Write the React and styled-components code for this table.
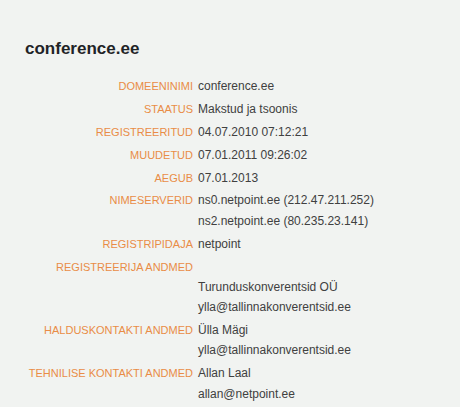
import React from "react";
import styled, { createGlobalStyle } from "styled-components";

const GlobalStyle = createGlobalStyle`
  html, body {
    margin: 0;
    padding: 0;
    background: #f1f3f1;
  }
  body {
    font-family: "Liberation Sans", Arial, sans-serif;
    -webkit-font-smoothing: antialiased;
  }
`;

const Page = styled.div`
  padding: 39px 0 0 25px;
  min-height: 407px;
  box-sizing: border-box;
`;

const Title = styled.h2`
  margin: 0 0 17px;
  font-size: 17px;
  line-height: 20px;
  font-weight: 700;
  color: #1f2327;
`;

const InfoGrid = styled.dl`
  margin: 0;
  display: grid;
  grid-template-columns: 168px 1fr;
  column-gap: 5px;
  row-gap: 2.6px;
  align-items: baseline;
`;

const Label = styled.dt`
  text-align: right;
  font-size: 11px;
  line-height: 20.3px;
  color: #e98c46;
  text-transform: uppercase;
`;

const Value = styled.dd`
  margin: 0;
  font-size: 12px;
  line-height: 20.3px;
  color: #404040;
`;

const rows = [
  { label: "Domeeninimi", lines: ["conference.ee"] },
  { label: "Staatus", lines: ["Makstud ja tsoonis"] },
  { label: "Registreeritud", lines: ["04.07.2010 07:12:21"] },
  { label: "Muudetud", lines: ["07.01.2011 09:26:02"] },
  { label: "Aegub", lines: ["07.01.2013"] },
  {
    label: "Nimeserverid",
    lines: ["ns0.netpoint.ee (212.47.211.252)", "ns2.netpoint.ee (80.235.23.141)"],
  },
  { label: "Registripidaja", lines: ["netpoint"] },
  {
    label: "Registreerija andmed",
    lines: ["\u00a0", "Turunduskonverentsid OÜ", "ylla@tallinnakonverentsid.ee"],
  },
  {
    label: "Halduskontakti andmed",
    lines: ["Ülla Mägi", "ylla@tallinnakonverentsid.ee"],
  },
  { label: "Tehnilise kontakti andmed", lines: ["Allan Laal", "allan@netpoint.ee"] },
];

export default function App() {
  return (
    <>
      <GlobalStyle />
      <Page>
        <Title>conference.ee</Title>
        <InfoGrid>
          {rows.map(row => (
            <React.Fragment key={row.label}>
              <Label>{row.label}</Label>
              <Value>
                {row.lines.map((line, i) => (
                  <div key={i}>{line}</div>
                ))}
              </Value>
            </React.Fragment>
          ))}
        </InfoGrid>
      </Page>
    </>
  );
}
